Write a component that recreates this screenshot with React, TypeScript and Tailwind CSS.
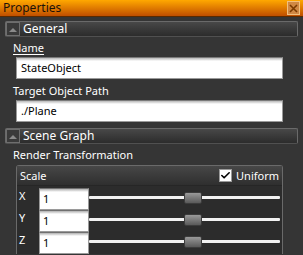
import { Check } from 'lucide-react'

function GroupHeader({ title }: { title: string }) {
  return (
    <div className="ml-[5px] mr-[5px] flex h-[16px] items-center rounded-[2px] border border-[#6a6a6a] border-b-[#505050] bg-gradient-to-b from-[#484848] to-[#2c2c2c]">
      <div className="flex h-[14px] w-[14px] items-center justify-center border border-[#6e6e6e] bg-[#3a3a3a]">
        <svg width="8" height="5" viewBox="0 0 8 5">
          <path d="M0 5 L4 1 L8 5 Z" fill="#8a8a8a" />
        </svg>
      </div>
      <span className="ml-[3px] text-[12px] leading-none text-white">{title}</span>
    </div>
  )
}

function TextBox({ value }: { value: string }) {
  return (
    <div className="ml-[16px] h-[22px] w-[267px] border border-[#9a9a9a] border-t-[#7a7a7a] bg-white">
      <div className="h-[3px] bg-gradient-to-b from-[#b8b8b8] to-white" />
      <div className="pl-[4px] text-[11px] leading-[14px] text-black">{value}</div>
    </div>
  )
}

function AxisRow({ axis }: { axis: string }) {
  return (
    <div className="flex h-[22px] items-center">
      <div className="w-[22px] self-start pl-[2px] pt-[1px] text-[11px] leading-[14px] text-white">
        {axis}
      </div>
      <div className="h-[22px] w-[50px] border border-[#9a9a9a] border-t-[#707070] bg-white">
        <div className="h-[3px] bg-gradient-to-b from-[#b0b0b0] to-white" />
        <div className="pl-[3px] text-[11px] leading-[14px] text-black">1</div>
      </div>
      <div className="relative h-[22px] w-[193px]">
        <div className="absolute left-0 right-[2px] top-[8px] h-[3px] rounded-[1px] bg-[#f2f2f2]" />
        <div className="absolute left-[95px] top-[4px] h-[12px] w-[18px] rounded-[2px] border border-[#3c3c3c] bg-gradient-to-b from-[#9a9a9a] to-[#5a5a5a]" />
      </div>
    </div>
  )
}

export default function App() {
  return (
    <div className="h-[255px] w-[303px] overflow-hidden bg-[#353535] font-['Noto_Sans',sans-serif]">
      <div className="flex h-[17px] items-center justify-between border-b border-[#5a2a00] bg-gradient-to-b from-[#ffa800] to-[#c04e00] pl-[3px] pr-[3px]">
        <span className="text-[12px] leading-none text-[#1c1208]">Properties</span>
        <div className="flex h-[14px] w-[13px] items-center justify-center border border-[#f0c080] bg-[#d08844]">
          <svg width="9" height="9" viewBox="0 0 9 9">
            <path d="M1 1 L8 8 M8 1 L1 8" stroke="#7a3a00" strokeWidth="1.6" />
          </svg>
        </div>
      </div>

      <div className="mt-[4px]">
        <GroupHeader title="General" />
      </div>
      <div className="ml-[13px] mt-[3px] text-[11px] leading-[16px] text-white">
        <span className="underline underline-offset-2">Name</span>
      </div>
      <div className="mt-[1px]">
        <TextBox value="StateObject" />
      </div>
      <div className="ml-[13px] mt-[4px] text-[11px] leading-[16px] text-white">Target Object Path</div>
      <div className="mt-[1px]">
        <TextBox value="./Plane" />
      </div>

      <div className="mt-[6px]">
        <GroupHeader title="Scene Graph" />
      </div>
      <div className="ml-[13px] mt-[3px] text-[11px] leading-[16px] text-white">Render Transformation</div>

      <div className="ml-[16px] mt-[2px] w-[267px] rounded-t-[3px] border border-b-0 border-[#6a6a6a] bg-[#2c2c2c]">
        <div className="flex h-[20px] items-center justify-between border-b border-[#262626] bg-gradient-to-b from-[#474747] to-[#2f2f2f] pl-[3px] pr-[3px]">
          <span className="text-[11px] leading-none text-white">Scale</span>
          <div className="flex items-center gap-[4px]">
            <div className="flex h-[13px] w-[13px] items-center justify-center border border-[#9a9a9a] bg-white">
              <Check size={11} strokeWidth={3.5} color="#000" />
            </div>
            <span className="text-[11px] leading-none text-white">Uniform</span>
          </div>
        </div>
        <div className="pt-[2px]">
          <AxisRow axis="X" />
          <AxisRow axis="Y" />
          <AxisRow axis="Z" />
        </div>
      </div>
    </div>
  )
}
